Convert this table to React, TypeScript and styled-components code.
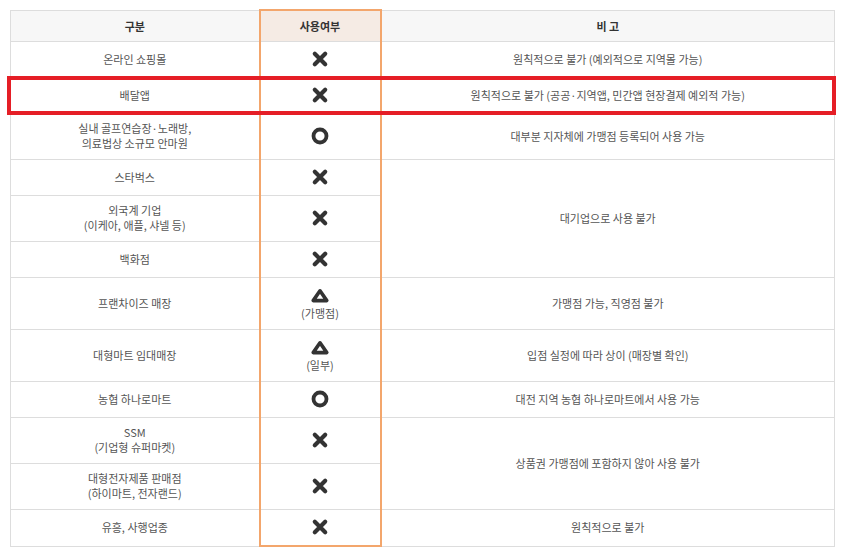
import styled, { createGlobalStyle } from 'styled-components';

type Mark = 'x' | 'o' | 't';

type Row = {
  name: string[];
  mark: Mark;
  sub?: string;
  note?: string;
  span?: number;
};

const rows: Row[] = [
  { name: ['온라인 쇼핑몰'], mark: 'x', note: '원칙적으로 불가 (예외적으로 지역몰 가능)' },
  { name: ['배달앱'], mark: 'x', note: '원칙적으로 불가 (공공·지역앱, 민간앱 현장결제 예외적 가능)' },
  {
    name: ['실내 골프연습장·노래방,', '의료법상 소규모 안마원'],
    mark: 'o',
    note: '대부분 지자체에 가맹점 등록되어 사용 가능',
  },
  { name: ['스타벅스'], mark: 'x', note: '대기업으로 사용 불가', span: 3 },
  { name: ['외국계 기업', '(이케아, 애플, 샤넬 등)'], mark: 'x' },
  { name: ['백화점'], mark: 'x' },
  { name: ['프랜차이즈 매장'], mark: 't', sub: '(가맹점)', note: '가맹점 가능, 직영점 불가' },
  { name: ['대형마트 임대매장'], mark: 't', sub: '(일부)', note: '입점 실정에 따라 상이 (매장별 확인)' },
  { name: ['농협 하나로마트'], mark: 'o', note: '대전 지역 농협 하나로마트에서 사용 가능' },
  {
    name: ['SSM', '(기업형 슈퍼마켓)'],
    mark: 'x',
    note: '상품권 가맹점에 포함하지 않아 사용 불가',
    span: 2,
  },
  { name: ['대형전자제품 판매점', '(하이마트, 전자랜드)'], mark: 'x' },
  { name: ['유흥, 사행업종'], mark: 'x', note: '원칙적으로 불가' },
];

const MarkIcon = ({ mark }: { mark: Mark }) => {
  if (mark === 'o') {
    return (
      <Icon viewBox="0 0 20 20">
        <circle cx="10" cy="10" r="6.5" fill="none" stroke="#333" strokeWidth="3.8" />
      </Icon>
    );
  }
  if (mark === 't') {
    return (
      <Icon viewBox="0 0 20 20">
        <polygon
          points="10,5.8 16.8,15.6 3.2,15.6"
          fill="none"
          stroke="#333"
          strokeWidth="3.6"
          strokeLinejoin="round"
        />
      </Icon>
    );
  }
  return (
    <Icon viewBox="0 0 20 20">
      <path d="M4.8 4.8 L15.2 15.2 M15.2 4.8 L4.8 15.2" stroke="#333" strokeWidth="4.2" strokeLinecap="round" />
    </Icon>
  );
};

const App = () => {
  return (
    <>
      <GlobalStyle />
      <Page>
        <Wrap>
          <Table>
            <colgroup>
              <col style={{ width: 249 }} />
              <col style={{ width: 121 }} />
              <col />
            </colgroup>
            <thead>
              <tr>
                <Th>구분</Th>
                <Th $accent>사용여부</Th>
                <Th>비 고</Th>
              </tr>
            </thead>
            <tbody>
              {rows.map((row, i) => (
                <tr key={i}>
                  <Td>
                    {row.name.map((line) => (
                      <Line key={line}>{line}</Line>
                    ))}
                  </Td>
                  <MarkCell $last={i === rows.length - 1}>
                    <MarkIcon mark={row.mark} />
                    {row.sub && <SubLine>{row.sub}</SubLine>}
                  </MarkCell>
                  {row.note && <Td rowSpan={row.span ?? 1}>{row.note}</Td>}
                </tr>
              ))}
            </tbody>
          </Table>
          <Highlight />
        </Wrap>
      </Page>
    </>
  );
};

const GlobalStyle = createGlobalStyle`
  body {
    margin: 0;
    background: #fff;
    font-family: "Noto Sans CJK KR", "Noto Sans", sans-serif;
  }
`;

const Page = styled.div`
  padding: 9px 0 0 10px;
`;

const Wrap = styled.div`
  position: relative;
  width: 825px;
`;

const Table = styled.table`
  width: 100%;
  border-collapse: collapse;
  table-layout: fixed;
  font-size: 11px;
  color: #555;
`;

const Th = styled.th<{ $accent?: boolean }>`
  height: 16px;
  padding: 7px 10px 7px;
  line-height: 16px;
  font-size: 11px;
  font-weight: 700;
  color: #333;
  text-align: center;
  background: ${(p) => (p.$accent ? '#f5ebe4' : '#f7f7f7')};
  border: 1px solid #dddddd;
  ${(p) =>
    p.$accent &&
    `
    border-left: 2px solid #f3a66c;
    border-right: 2px solid #f3a66c;
    border-top: 2px solid #f3a66c;
  `}
`;

const Td = styled.td`
  padding: 7px 10px 8px;
  line-height: 15px;
  text-align: center;
  vertical-align: middle;
  border: 1px solid #dddddd;
`;

const MarkCell = styled(Td)<{ $last?: boolean }>`
  height: 20px;
  border-left: 2px solid #f3a66c;
  border-right: 2px solid #f3a66c;
  ${(p) => p.$last && 'border-bottom: 2px solid #f3a66c;'}
`;

const Line = styled.div`
  white-space: nowrap;
`;

const SubLine = styled(Line)`
  line-height: 16px;
`;

const Icon = styled.svg`
  display: block;
  width: 20px;
  height: 20px;
  margin: 0 auto;
`;

const Highlight = styled.div`
  position: absolute;
  top: 67px;
  left: -3px;
  width: 829px;
  height: 39px;
  box-sizing: border-box;
  border: 4px solid #e51e26;
  pointer-events: none;
`;

export default App;
